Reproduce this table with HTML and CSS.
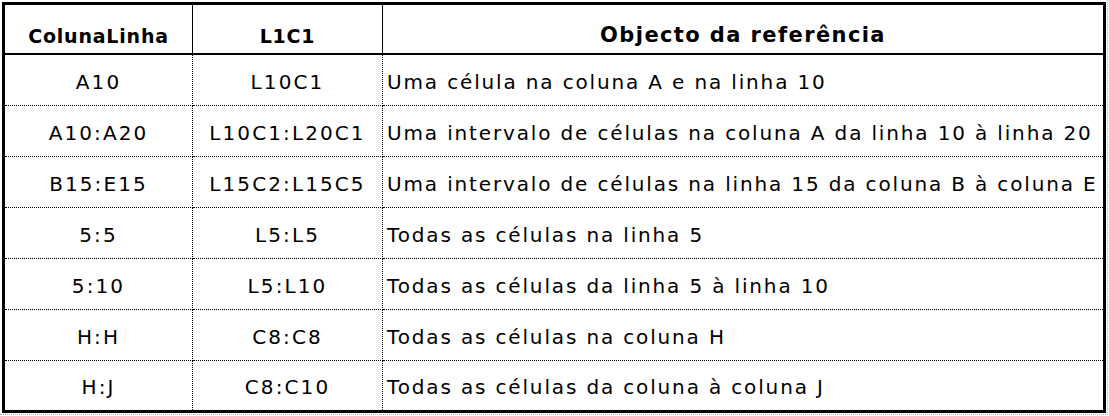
FILE: index.html
```html
<!DOCTYPE html>
<html lang="pt">
<head>
<meta charset="utf-8">
<title>Referências</title>
<link rel="stylesheet" href="styles.css">
</head>
<body>
<div class="sheet">
  <div class="grid">
    <div class="cell head c1">ColunaLinha</div>
    <div class="cell head c2">L1C1</div>
    <div class="cell head c3">Objecto da referência</div>

    <div class="cell c1">A10</div>
    <div class="cell c2">L10C1</div>
    <div class="cell c3">Uma célula na coluna A e na linha 10</div>

    <div class="cell c1">A10:A20</div>
    <div class="cell c2">L10C1:L20C1</div>
    <div class="cell c3">Uma intervalo de células na coluna A da linha 10 à linha 20</div>

    <div class="cell c1">B15:E15</div>
    <div class="cell c2">L15C2:L15C5</div>
    <div class="cell c3">Uma intervalo de células na linha 15 da coluna B à coluna E</div>

    <div class="cell c1">5:5</div>
    <div class="cell c2">L5:L5</div>
    <div class="cell c3">Todas as células na linha 5</div>

    <div class="cell c1">5:10</div>
    <div class="cell c2">L5:L10</div>
    <div class="cell c3">Todas as células da linha 5 à linha 10</div>

    <div class="cell c1">H:H</div>
    <div class="cell c2">C8:C8</div>
    <div class="cell c3">Todas as células na coluna H</div>

    <div class="cell c1 last">H:J</div>
    <div class="cell c2 last">C8:C10</div>
    <div class="cell c3 last">Todas as células da coluna à coluna J</div>
  </div>
</div>
</body>
</html>
```
FILE: styles.css
```css
html, body {
  margin: 0;
  padding: 0;
  background: #fff;
}

body {
  font-family: "DejaVu Sans", "Liberation Sans", sans-serif;
  color: #000;
}

.sheet {
  width: fit-content;
  padding: 2px 1px 1px 2px;
  border-right: 1px dotted #b0b0b0;
  border-bottom: 1px dotted #b0b0b0;
}

.grid {
  display: grid;
  grid-template-columns: 188px 190px 720px;
  grid-template-rows: 50px repeat(6, 51px) 49px;
  border: 3px solid #000;
  width: 1098px;
}

.cell {
  display: flex;
  align-items: center;
  box-sizing: border-box;
  font-size: 20px;
  letter-spacing: 1.85px;
  white-space: nowrap;
  border-bottom: 1px dotted #000;
  padding-top: 3px;
}

.cell.c1,
.cell.c2 {
  justify-content: center;
  border-right: 1px dotted #000;
  letter-spacing: 2.1px;
}

.cell.c3 {
  padding-left: 4px;
}

.cell.last {
  border-bottom: none;
}

.cell.head {
  font-size: 19px;
  font-weight: bold;
  letter-spacing: 0.8px;
  align-items: flex-end;
  padding-top: 0;
  padding-bottom: 6px;
  border-bottom: 2px solid #000;
}

.cell.head.c1,
.cell.head.c2 {
  border-right: 1px solid #000;
}

.cell.head.c3 {
  justify-content: center;
  padding-left: 0;
  font-size: 21px;
  letter-spacing: 1.4px;
}
```
